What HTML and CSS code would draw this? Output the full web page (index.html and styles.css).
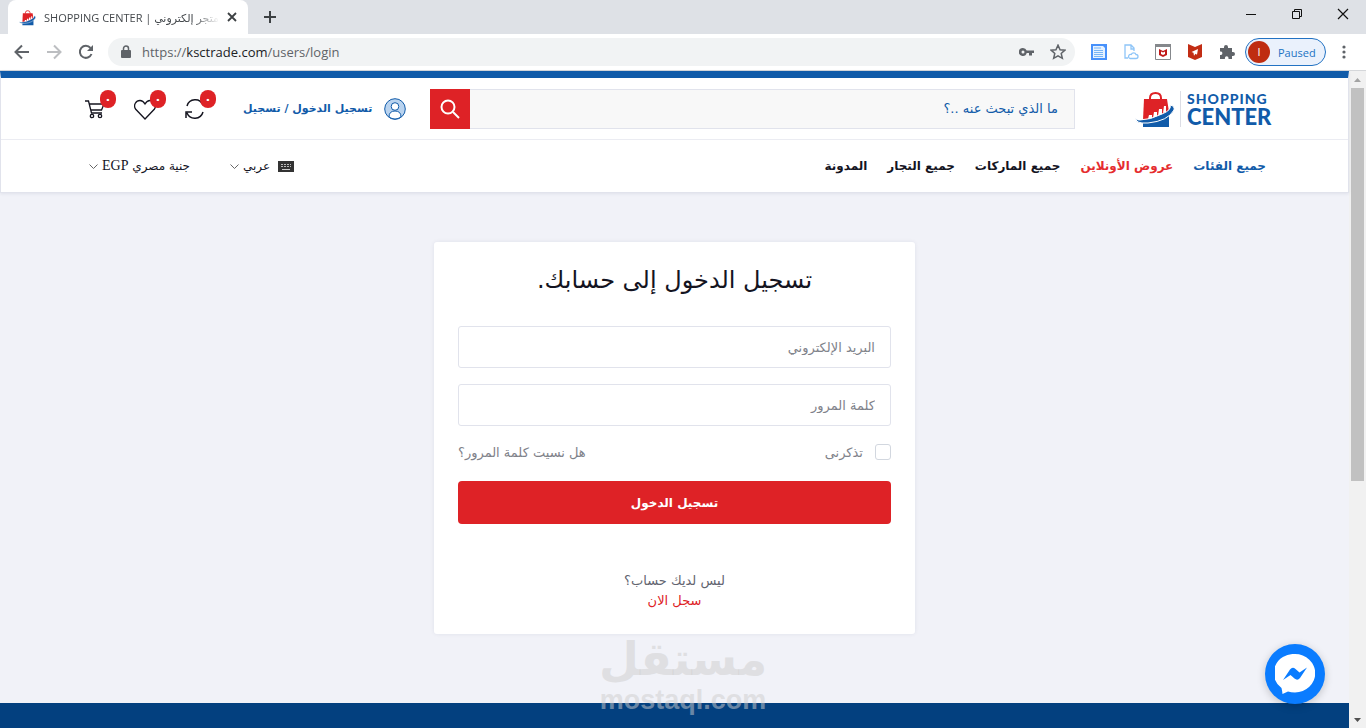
FILE: index.html
```html
<!DOCTYPE html>
<html lang="ar">
<head>
<meta charset="utf-8">
<title>SHOPPING CENTER | متجر إلكتروني</title>
<link rel="stylesheet" href="styles.css">
</head>
<body>

<!-- browser window -->
<div class="tabs">
  <div class="tab">
    <svg class="favicon" width="17" height="17" viewBox="0 0 40 36"><use href="#bag"/></svg>
    <span class="tab-title">SHOPPING CENTER | <bdi>متجر إلكتروني</bdi></span>
    <button class="plain" aria-label="Close tab"><svg width="10" height="10" viewBox="0 0 10 10"><path d="M1 1l8 8M9 1l-8 8" stroke="#3c4043" stroke-width="1.8"/></svg></button>
  </div>
  <button class="plain new-tab" aria-label="New tab"><svg width="14" height="14" viewBox="0 0 14 14"><path d="M7 1v12M1 7h12" stroke="#3c4043" stroke-width="2"/></svg></button>
  <div class="window-buttons">
    <button class="plain" aria-label="Minimize"><svg width="12" height="12" viewBox="0 0 12 12"><path d="M1 6.500h10" stroke="#111"/></svg></button>
    <button class="plain" aria-label="Restore"><svg width="12" height="12" viewBox="0 0 12 12" fill="none" stroke="#111"><path d="M1.500 3.500h7v7h-7zM3.500 3.500v-2h7v7h-2"/></svg></button>
    <button class="plain" aria-label="Close"><svg width="12" height="12" viewBox="0 0 12 12"><path d="M1 1l10 10M11 1L1 11" stroke="#111" stroke-width="1.200"/></svg></button>
  </div>
</div>

<div class="toolbar">
  <button class="plain" aria-label="Back"><svg width="16" height="16" viewBox="0 0 16 16" fill="none" stroke="#5f6368" stroke-width="2"><path d="M15 8H2M8 1.500L1.500 8L8 14.500"/></svg></button>
  <button class="plain" aria-label="Forward"><svg width="16" height="16" viewBox="0 0 16 16" fill="none" stroke="#bcbec1" stroke-width="2"><path d="M1 8h13M8 1.500L14.500 8L8 14.500"/></svg></button>
  <button class="plain" aria-label="Reload"><svg width="16" height="16" viewBox="0 0 16 16"><path d="M13.500 10A6 6 0 1 1 12.500 4" fill="none" stroke="#5f6368" stroke-width="2"/><path d="M15 1v6H9z" fill="#5f6368"/></svg></button>
  <div class="address">
    <svg width="10" height="14" viewBox="0 0 10 14"><rect y="5" width="10" height="8" rx="1" fill="#5f6368"/><path d="M2.500 6V3.500a2.500 2.500 0 0 1 5 0V6" fill="none" stroke="#5f6368" stroke-width="1.500"/></svg>
    <span class="url">https://<b>ksctrade.com</b>/users/login</span>
    <svg width="15" height="10" viewBox="0 0 15 10"><path d="M4 1a4 4 0 1 0 3.700 5H10v2.500h3V6h2V3.500H7.700A4 4 0 0 0 4 1zm0 2.500a1.500 1.500 0 1 1 0 3a1.500 1.500 0 0 1 0-3z" fill="#5f6368" fill-rule="evenodd"/></svg>
    <svg width="16" height="16" viewBox="0 0 14 14"><path d="M7 1l1.800 4 4.200.4-3.200 2.900 1 4.200L7 10.300l-3.800 2.200 1-4.200L1 5.400 5.200 5z" fill="none" stroke="#5f6368" stroke-width="1.300"/></svg>
  </div>
  <div class="extensions">
    <svg width="16" height="16" viewBox="0 0 16 16"><path d="M0 0h16v16H0z" fill="#4791fb"/><path d="M2 2h10l2 2v10H2z" fill="#e6f2ff"/><path d="M3 4h7M3 6.500h9M3 8.500h9M3 10.500h9M3 12.500h9" stroke="#79b5f5"/></svg>
    <svg width="16" height="16" viewBox="0 0 16 16" fill="none" stroke="#8ec5f8" stroke-width="1.300"><path d="M5 14H2V1h6l3 3v3M8 1v4h3"/><path d="M7 14.500h6a2 2 0 0 0 0-4a2.500 2.500 0 0 0-4.700 0A2 2 0 0 0 7 14.500z"/></svg>
    <svg width="16" height="16" viewBox="0 0 16 16"><path d="M.5.500h15v15H.5z" fill="#fff" stroke="#85888c"/><path d="M0 0h16v3H0z" fill="#85888c"/><path d="M4 5l4 2 4-2v6l-4 2-4-2z" fill="#c01818"/><path d="M6 7.500l2 1 2-1v2.500l-2 1-2-1z" fill="#fff"/></svg>
    <svg width="16" height="16" viewBox="0 0 16 16"><path d="M1 0l7 3 7-3v13l-7 3-7-3z" fill="#c22d14"/><path d="M11 5L4.500 8l2 .8.500 3 1.500-2 1.500 1z" fill="#fff"/></svg>
    <svg width="16" height="16" viewBox="0 0 16 16"><path d="M1 4h4V3a2 2 0 0 1 4 0v1h4v4h1a2 2 0 0 1 0 4h-1v3H9.500v-1a1.800 1.800 0 0 0-3.600 0v1H1v-4h1a1.800 1.800 0 0 0 0-3.500H1z" fill="#5f6368"/></svg>
  </div>
  <button class="profile"><span class="avatar">I</span>Paused</button>
  <button class="plain" aria-label="Menu"><svg width="4" height="14" viewBox="0 0 4 14" fill="#5f6368"><circle cx="2" cy="2" r="1.600"/><circle cx="2" cy="7" r="1.600"/><circle cx="2" cy="12" r="1.600"/></svg></button>
</div>

<div class="viewport">
  <div class="page" dir="rtl">

    <header class="header">
      <div class="header-top">
        <a href="#" class="logo" dir="ltr">
          <svg width="40" height="36" viewBox="0 0 40 36">
            <g id="bag">
              <path d="M15 9V7q0-5 5.500-5T26 7v2" fill="none" stroke="#de2226" stroke-width="2"/>
              <path d="M9 8h23l2 13q-10 7-26 8z" fill="#de2226"/>
              <path d="M8 30q16 1 26-9v15H8z" fill="#115ba9"/>
              <path d="M13 28l1-4h3v4zM18 27l1-6h3v5zM23 25l1-7h3v6zM28 22l1-7h2v6z" fill="#fff"/>
              <path d="M1 26q-2 7 12 6q20-2 26-13q1-4-4-5q2 5-8 9q-12 6-22 6q-5 0-4-3z" fill="#115ba9" stroke="#fff"/>
            </g>
          </svg>
          <span class="logo-text"><span>SHOPPING</span><strong>CENTER</strong></span>
        </a>

        <form class="search">
          <input type="text" aria-label="بحث" placeholder="ما الذي تبحث عنه ..؟">
          <button type="button" aria-label="بحث"><svg width="20" height="20" viewBox="0 0 20 20" fill="none" stroke="#fff" stroke-width="2"><circle cx="8" cy="8" r="6.500"/><path d="M13 13l6 6"/></svg></button>
        </form>

        <div class="account">
          <svg width="22" height="22" viewBox="0 0 22 22" fill="#b9d3ef" stroke="#115ba9"><circle cx="11" cy="11" r="10.300"/><path d="M5 19q0-6 6-6t6 6q-6 4-12 0z" fill="#fff"/><circle cx="11" cy="8.500" r="3.800" fill="#fff"/></svg>
          <span><a href="#">تسجيل الدخول</a> / <a href="#">تسجيل</a></span>
        </div>

        <div class="actions">
          <a href="#" aria-label="مقارنة"><svg width="22" height="22" viewBox="0 0 22 22" fill="none" stroke="#14141f" stroke-width="1.500"><path d="M3 8a8.500 8.500 0 0 1 16-1M19 14a8.500 8.500 0 0 1-16 1M2 20v-6h6"/></svg><span class="badge">٠</span></a>
          <a href="#" aria-label="المفضلة"><svg width="22" height="22" viewBox="0 0 22 22" fill="none" stroke="#14141f" stroke-width="1.300"><path d="M11 21L1.500 11C-1 7 2 2.500 6 2.500q3 0 5 3.500q2-3.500 5-3.500c4 0 7 4.500 4.500 8.500z"/></svg><span class="badge">٠</span></a>
          <a href="#" aria-label="السلة"><svg width="22" height="22" viewBox="0 0 22 22" fill="none" stroke="#14141f" stroke-width="1.300"><path d="M1 3h3.500l3 12H18M5.300 6H20l-2.500 6H7"/><circle cx="8" cy="18" r="1.700"/><circle cx="16" cy="18" r="1.700"/></svg><span class="badge">٠</span></a>
        </div>
      </div>

      <div class="header-bottom">
        <nav class="menu">
          <a href="#" class="blue">جميع الفئات</a>
          <a href="#" class="red">عروض الأونلاين</a>
          <a href="#">جميع الماركات</a>
          <a href="#">جميع التجار</a>
          <a href="#">المدونة</a>
        </nav>
        <div class="settings">
          <button class="plain"><svg width="16" height="11" viewBox="0 0 16 11"><path d="M0 0h16v11H0z" fill="#333"/><path d="M3 3.500h10M3 5.500h10" stroke="#bbb" stroke-dasharray="2 1"/><path d="M4 8.500h8" stroke="#ccc"/></svg>عربي<svg width="9" height="5" viewBox="0 0 9 5"><path d="M.5.500l4 4 4-4" fill="none" stroke="#666"/></svg></button>
          <button class="plain"><span>جنية مصري <span class="currency">EGP</span></span><svg width="9" height="5" viewBox="0 0 9 5"><path d="M.5.500l4 4 4-4" fill="none" stroke="#666"/></svg></button>
        </div>
      </div>
    </header>

    <main class="main">
      <form class="card">
        <h1>تسجيل الدخول إلى حسابك.</h1>
        <input class="field" type="email" aria-label="البريد الإلكتروني" placeholder="البريد الإلكتروني">
        <input class="field" type="password" aria-label="كلمة المرور" placeholder="كلمة المرور">
        <div class="options">
          <label><input type="checkbox">تذكرنى</label>
          <a href="#">هل نسيت كلمة المرور؟</a>
        </div>
        <button type="button" class="submit">تسجيل الدخول</button>
        <p class="register">ليس لديك حساب؟<br><a href="#">سجل الان</a></p>
      </form>
    </main>

    <footer class="footer"></footer>

    <div class="watermark"><span class="mark-ar">مستقل</span><span class="mark-en" dir="ltr">mostaql.com</span></div>

    <button class="messenger" aria-label="Messenger">
      <svg width="40" height="40" viewBox="0 0 40 40"><path d="M20 0a20 19 0 1 1 0 38.500q-4 0-7-1L7.500 40q-.5-4-1-6A20 19 0 0 1 20 0z" fill="#fff"/><path d="M8 26l7-10.500q2.500-3 5.500-.5l4 3.500L32 13.500l-7 10.500q-2.500 3-5.500.5l-4-3.500z" fill="#0a7cff"/></svg>
    </button>
  </div>

  <div class="scrollbar">
    <svg width="7" height="4" viewBox="0 0 7 4"><path d="M0 4l3.500-4L7 4z" fill="#a3a3a3"/></svg>
    <div class="thumb"></div>
    <svg width="7" height="4" viewBox="0 0 7 4"><path d="M0 0l3.500 4L7 0z" fill="#505050"/></svg>
  </div>
</div>

</body>
</html>
```
FILE: styles.css
```css
* {
  box-sizing: border-box;
}

body {
  margin: 0;
  height: 100vh;
  overflow: hidden;
  display: flex;
  flex-direction: column;
  font-family: "DejaVu Sans", sans-serif;
  font-size: 12px;
  color: #14141f;
  background: #fff;
}

a {
  color: inherit;
  text-decoration: none;
}

svg {
  display: block;
  flex: none;
}

button {
  font-family: inherit;
  cursor: pointer;
}

.plain {
  display: flex;
  align-items: center;
  padding: 0;
  border: 0;
  background: none;
  color: inherit;
}

/* browser window */
.tabs {
  flex: none;
  display: flex;
  align-items: center;
  height: 34px;
  padding: 0 17px 0 8px;
  background: #dee1e6;
}

.tab {
  display: flex;
  align-items: center;
  gap: 8px;
  width: 240px;
  height: 34px;
  padding: 0 11px;
  border-radius: 8px 8px 0 0;
  background: #fff;
}

.tab-title {
  flex: 1;
  overflow: hidden;
  white-space: nowrap;
  font-family: "Open Sans", "DejaVu Sans", sans-serif;
  font-size: 11px;
  color: #45494d;
  mask-image: linear-gradient(to right, #000 85%, transparent);
}

.new-tab {
  margin-left: 15px;
}

.window-buttons {
  display: flex;
  gap: 34px;
  margin-left: auto;
  margin-bottom: 6px;
}

.toolbar {
  flex: none;
  display: flex;
  align-items: center;
  gap: 16px;
  height: 37px;
  padding: 0 20px 0 14px;
  border-bottom: 1px solid #d5d7da;
  font-family: "Open Sans", sans-serif;
}

.address {
  flex: 1;
  display: flex;
  align-items: center;
  gap: 16px;
  height: 28px;
  margin-left: -2px;
  padding: 0 9px 0 13px;
  border-radius: 14px;
  background: #f1f3f4;
}

.url {
  flex: 1;
  margin-left: -5px;
  font-size: 13px;
  color: #5f6368;
}

.url b {
  font-weight: normal;
  color: #202124;
}

.extensions {
  display: flex;
  gap: 16px;
  margin-right: -6px;
}

.profile {
  display: flex;
  align-items: center;
  gap: 8px;
  width: 81px;
  height: 28px;
  padding: 0 2px;
  border: 1px solid #2272c3;
  border-radius: 14px;
  background: #eaf1fc;
  font-size: 11px;
  color: #2272c3;
}

.avatar {
  width: 22px;
  line-height: 22px;
  border-radius: 50%;
  background: #bf2c10;
  color: #fff;
}

/* page area */
.viewport {
  flex: 1;
  display: flex;
  min-height: 0;
}

.page {
  position: relative;
  flex: 1;
  display: flex;
  flex-direction: column;
  background: #f1f2f8;
}

.scrollbar {
  display: flex;
  flex-direction: column;
  align-items: center;
  width: 17px;
  padding: 7px 0 6px;
  background: #f1f1f1;
}

.thumb {
  width: 13px;
  height: 61%;
  margin-top: 6px;
  margin-bottom: auto;
  background: #c1c1c1;
}

.header {
  border: 1px solid #e1e3ec;
  border-top: 7px solid #115ba9;
  background: #fff;
  box-shadow: 0 1px 3px rgba(30, 40, 80, 0.08);
}

.header-top,
.header-bottom {
  display: flex;
  align-items: center;
}

.header-top {
  height: 62px;
  padding: 0 77px 0 83px;
  border-bottom: 1px solid #ebecf2;
}

.header-bottom {
  justify-content: space-between;
  height: 52px;
  padding: 0 82px 0 88px;
}

.logo {
  display: flex;
  align-items: center;
  width: 136px;
  margin-left: 60px;
  color: #115ba9;
}

.logo-text {
  display: flex;
  flex-direction: column;
  margin-left: 5px;
  padding-left: 6px;
  border-left: 1px solid #dcdde5;
  font-family: Lato, sans-serif;
}

.logo-text span {
  font-size: 14px;
  font-weight: 900;
  line-height: 16px;
  letter-spacing: 1px;
}

.logo-text strong {
  font-size: 22px;
  font-weight: 900;
  line-height: 20px;
}

.search {
  flex: 1;
  display: flex;
  height: 40px;
}

.search input {
  flex: 1;
  min-width: 0;
  padding: 0 16px;
  border: 1px solid #e1e3ec;
  border-left: 0;
  border-radius: 0;
  background: #f8f8f8;
  font: 13px "DejaVu Sans", sans-serif;
}

.search input::placeholder {
  color: #115ba9;
  opacity: 1;
}

.search button {
  display: flex;
  align-items: center;
  justify-content: center;
  width: 40px;
  padding: 0;
  border: 0;
  background: #de2226;
}

.account {
  display: flex;
  align-items: center;
  gap: 12px;
  margin-right: 24px;
  white-space: nowrap;
  font-size: 11px;
  font-weight: bold;
  color: #115ba9;
}

.actions {
  display: flex;
  gap: 28px;
  margin-right: 37px;
}

.actions a {
  position: relative;
}

.badge {
  position: absolute;
  top: -8px;
  right: -10px;
  width: 16px;
  height: 18px;
  border-radius: 8px;
  background: #de2226;
  color: #fff;
  font-size: 12px;
  font-weight: bold;
  line-height: 18px;
  text-align: center;
}

.menu {
  display: flex;
  gap: 20px;
  font-size: 12px;
  font-weight: bold;
}

.blue {
  color: #115ba9;
}

.red {
  color: #e52d2f;
}

.settings {
  display: flex;
  gap: 40px;
}

.settings button {
  gap: 4px;
  font-size: 12px;
}

.settings button > svg:first-child {
  margin-left: 4px;
}

.currency {
  font-family: "Liberation Serif", serif;
  font-size: 14px;
}

/* login form */
.main {
  flex: 1;
  padding-top: 49px;
}

.card {
  width: 481px;
  max-width: 100%;
  height: 392px;
  margin: 0 auto;
  padding: 20px 24px;
  border-radius: 3px;
  background: #fff;
  box-shadow: 0 0 4px rgba(30, 40, 80, 0.08);
}

.card h1 {
  margin: 0 0 28px;
  font-size: 24px;
  font-weight: normal;
  line-height: 36px;
  text-align: center;
}

.field {
  display: block;
  width: 100%;
  height: 42px;
  margin-bottom: 16px;
  padding: 0 15px;
  border: 1px solid #e1e3ec;
  border-radius: 3px;
  font: 13px "DejaVu Sans", sans-serif;
}

.field::placeholder {
  color: #80828a;
  opacity: 1;
}

.options {
  display: flex;
  align-items: center;
  justify-content: space-between;
  height: 20px;
  margin-bottom: 19px;
  font-size: 13px;
  color: #80828a;
}

.options label {
  display: flex;
  align-items: center;
  gap: 12px;
}

.options input {
  appearance: none;
  width: 16px;
  height: 16px;
  margin: 0;
  border: 1px solid #d2d7df;
  border-radius: 3px;
}

.submit {
  width: 100%;
  height: 43px;
  border: 0;
  border-radius: 4px;
  background: #de2226;
  color: #fff;
  font-size: 12px;
  font-weight: bold;
}

.register {
  margin: 47px 0 0;
  font-size: 13px;
  line-height: 20px;
  text-align: center;
  color: #62646f;
}

.register a {
  color: #de2226;
}

.footer {
  height: 25px;
  background: #03407f;
}

/* things floating over the page */
.watermark {
  position: absolute;
  bottom: 13px;
  left: 17px;
  right: 0;
  display: flex;
  flex-direction: column;
  align-items: center;
  font-weight: bold;
  color: rgba(205, 205, 205, 0.5);
  pointer-events: none;
}

.mark-ar {
  font-size: 46px;
  line-height: 52px;
}

.mark-en {
  font-family: "Liberation Sans", sans-serif;
  font-size: 27px;
  line-height: 30px;
}

.messenger {
  position: absolute;
  right: 24px;
  bottom: 24px;
  display: flex;
  align-items: center;
  justify-content: center;
  width: 60px;
  height: 60px;
  padding: 0;
  border: 0;
  border-radius: 50%;
  background: #0a7cff;
  box-shadow: 0 2px 8px rgba(0, 0, 0, 0.2);
}
```
